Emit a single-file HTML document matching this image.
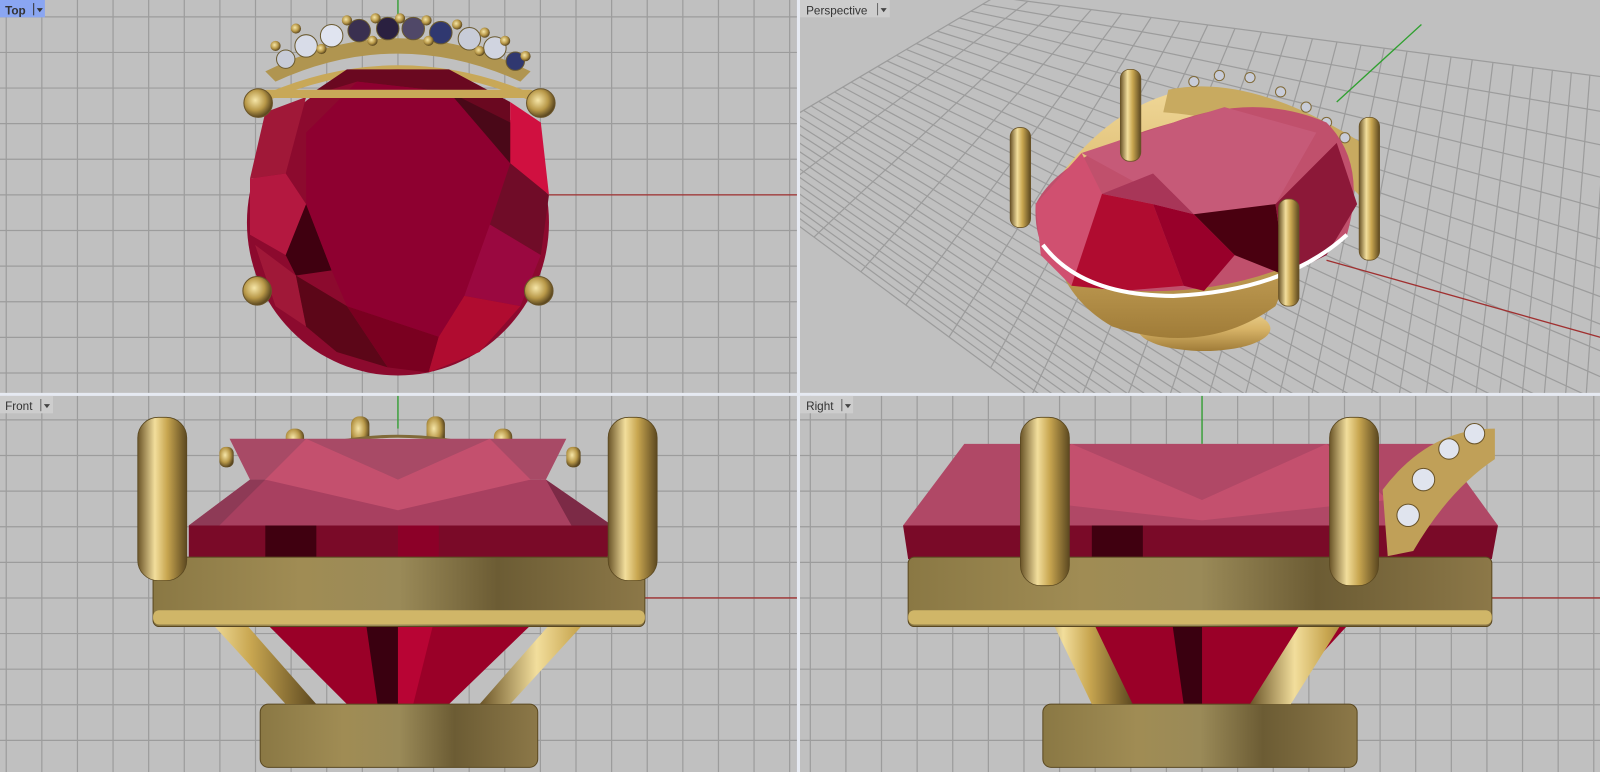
<!DOCTYPE html>
<html><head><meta charset="utf-8"><style>
html,body{margin:0;padding:0;background:#e6eaf2;width:1600px;height:772px;overflow:hidden}
svg{display:block;overflow:hidden}
.lbl{font-family:"Liberation Sans",sans-serif;font-size:11.5px;fill:#333}
</style></head><body>
<svg id="s" width="1600" height="772" viewBox="0 0 1600 772" xmlns="http://www.w3.org/2000/svg">
<defs>
<clipPath id="c1"><rect x="0" y="0" width="781" height="385"/></clipPath>
<clipPath id="c2"><rect x="784" y="0" width="800" height="385"/></clipPath>
<clipPath id="c3"><rect x="0" y="388" width="781" height="369"/></clipPath>
<clipPath id="c4"><rect x="784" y="388" width="800" height="369"/></clipPath>
<linearGradient id="gb" x1="0" y1="0" x2="1" y2="0">
<stop offset="0" stop-color="#8a7844"/><stop offset=".3" stop-color="#a08c54"/><stop offset=".5" stop-color="#9a8a58"/><stop offset=".7" stop-color="#6c5c34"/><stop offset="1" stop-color="#8c7848"/></linearGradient>
<linearGradient id="gp" x1="0" y1="0" x2="1" y2="0">
<stop offset="0" stop-color="#6a5428"/><stop offset=".35" stop-color="#f2de9c"/><stop offset=".6" stop-color="#c8a650"/><stop offset="1" stop-color="#5c4820"/></linearGradient>
<radialGradient id="gc" cx=".4" cy=".4" r=".6"><stop offset="0" stop-color="#f6e6a8"/><stop offset=".6" stop-color="#b89848"/><stop offset="1" stop-color="#5c4820"/></radialGradient>
<linearGradient id="gpg" x1="0" y1="0" x2="0" y2="1"><stop offset="0" stop-color="#f0d898"/><stop offset=".5" stop-color="#d8b468"/><stop offset="1" stop-color="#a07c38"/></linearGradient>
</defs>
<g transform="scale(1.0204)">
<rect x="0" y="0" width="781" height="385" fill="#c0c0c0"/>
<rect x="784" y="0" width="800" height="385" fill="#c0c0c0"/>
<rect x="0" y="388" width="781" height="369" fill="#c0c0c0"/>
<rect x="784" y="388" width="800" height="369" fill="#c0c0c0"/>
<g id="grids" stroke="#9c9c9c" stroke-width="1.2" fill="none"></g>

<g stroke-width="1.3">
<line x1="538" y1="191" x2="781" y2="191" stroke="#a03030"/>
<line x1="390" y1="0" x2="390" y2="30" stroke="#30a030"/>
<line x1="630" y1="586" x2="781" y2="586" stroke="#a03030"/>
<line x1="390" y1="388" x2="390" y2="420" stroke="#30a030"/>
<line x1="1178" y1="388" x2="1178" y2="435" stroke="#30a030"/>
<line x1="1460" y1="586" x2="1584" y2="586" stroke="#a03030"/>
<line x1="1310" y1="100" x2="1393" y2="24" stroke="#30a030"/>
<line x1="1300" y1="255" x2="1584" y2="335" stroke="#a03030"/>
</g>

<g clip-path="url(#c1)">
<path d="M260,70 Q390,5 520,70 L510,80 Q390,25 270,80Z" fill="#b09550"/>
<g>
<circle cx="300" cy="45" r="11" fill="#d8dce8" stroke="#6a5a30"/><circle cx="325" cy="35" r="11" fill="#e0e4f0" stroke="#6a5a30"/>
<circle cx="352" cy="30" r="11" fill="#3a3050" stroke="#6a5a30"/><circle cx="380" cy="28" r="11" fill="#2a2040" stroke="#6a5a30"/>
<circle cx="405" cy="28" r="11" fill="#504868" stroke="#6a5a30"/><circle cx="432" cy="32" r="11" fill="#303870" stroke="#6a5a30"/>
<circle cx="460" cy="38" r="11" fill="#c8ccd8" stroke="#6a5a30"/><circle cx="485" cy="47" r="11" fill="#d0d4e0" stroke="#6a5a30"/>
<circle cx="280" cy="58" r="9" fill="#c8ccd8" stroke="#6a5a30"/><circle cx="505" cy="60" r="9" fill="#303870" stroke="#6a5a30"/>
</g>
<g fill="url(#gc)">
<circle cx="290" cy="28" r="5"/><circle cx="340" cy="20" r="5"/><circle cx="368" cy="18" r="5"/><circle cx="392" cy="18" r="5"/><circle cx="418" cy="20" r="5"/><circle cx="448" cy="24" r="5"/><circle cx="475" cy="32" r="5"/><circle cx="495" cy="40" r="5"/><circle cx="270" cy="45" r="5"/><circle cx="515" cy="55" r="5"/>
<circle cx="315" cy="48" r="5"/><circle cx="365" cy="40" r="5"/><circle cx="420" cy="40" r="5"/><circle cx="470" cy="50" r="5"/>
</g>
<path d="M262,95 Q390,40 520,95" fill="none" stroke="#c8a858" stroke-width="7"/>
<ellipse cx="390" cy="218" rx="148" ry="150" fill="#8c0a2e"/>
<g>
<polygon points="300,95 340,68 440,68 500,100 500,160 440,90 350,80" fill="#6a0820"/>
<polygon points="260,110 300,95 280,170 245,175" fill="#a01838"/>
<polygon points="500,100 530,120 538,191 500,160" fill="#d01040"/>
<polygon points="245,175 280,170 300,200 280,250 245,230" fill="#b41840"/>
<polygon points="280,250 300,200 325,265 290,270" fill="#400010"/>
<polygon points="500,160 538,191 530,250 480,220" fill="#700c28"/>
<polygon points="480,220 530,250 510,300 455,290" fill="#9a0840"/>
<polygon points="250,240 290,270 300,320 270,300" fill="#a01838"/>
<polygon points="290,270 340,300 380,360 330,345 300,320" fill="#5c0618"/>
<polygon points="340,300 430,330 420,365 380,360" fill="#7a0020"/>
<polygon points="430,330 455,290 510,300 470,345 420,365" fill="#b00c30"/>
<polygon points="300,130 350,80 440,90 500,160 480,220 455,290 430,330 340,300 325,265 300,200" fill="#8e0030"/>
<polygon points="440,90 500,120 500,160" fill="#4a0818"/>
</g>
<g fill="url(#gc)" stroke="#6a5428" stroke-width="1">
<rect x="258" y="88" width="265" height="8" fill="#c8a858" stroke="none" rx="3"/>
<circle cx="253" cy="101" r="14"/><circle cx="530" cy="101" r="14"/>
<circle cx="252" cy="285" r="14"/><circle cx="528" cy="285" r="14"/>
</g>
</g>

<g clip-path="url(#c2)">
<ellipse cx="1180" cy="322" rx="65" ry="22" fill="url(#gpg)"/>
<path d="M1030,185 Q1020,280 1090,320 Q1180,350 1250,300 L1300,180 Q1280,90 1180,85 Q1090,95 1030,185Z" fill="url(#gpg)"/>
<path d="M1145,88 Q1230,70 1350,150 L1340,200 Q1270,120 1140,110Z" fill="#c8aa60"/>
<g fill="#c8ccd8" stroke="#806a38"><circle cx="1170" cy="80" r="5"/><circle cx="1195" cy="74" r="5"/><circle cx="1225" cy="76" r="5"/><circle cx="1255" cy="90" r="5"/><circle cx="1280" cy="105" r="5"/><circle cx="1300" cy="120" r="5"/><circle cx="1318" cy="135" r="5"/></g>
<path d="M1015,200 Q1010,280 1110,285 Q1230,290 1320,230 Q1340,160 1300,120 Q1230,90 1150,120 Q1040,150 1015,200Z" fill="#c0506c"/>
<polygon points="1060,150 1150,120 1200,105 1290,130 1250,200 1170,210" fill="#c65a78"/>
<polygon points="1015,200 1060,150 1080,190 1050,280 1020,250" fill="#d05070"/>
<polygon points="1050,280 1080,190 1130,200 1160,280 1100,285" fill="#b00c30"/>
<polygon points="1130,200 1170,210 1210,250 1180,285 1160,280" fill="#98002a"/>
<polygon points="1170,210 1250,200 1260,270 1210,250" fill="#4a0010"/>
<polygon points="1250,200 1310,140 1330,200 1300,250 1260,270" fill="#8c1838"/>
<polygon points="1080,190 1130,200 1170,210 1130,170" fill="#a83658"/>
<path d="M1022,240 Q1060,290 1150,290 Q1260,285 1320,230" fill="none" stroke="#fff" stroke-width="4"/>
<g stroke="#6a5428" stroke-width=".8">
<rect x="1098" y="68" width="20" height="90" rx="9" fill="url(#gp)"/>
<rect x="990" y="125" width="20" height="98" rx="9" fill="url(#gp)"/>
<rect x="1332" y="115" width="20" height="140" rx="9" fill="url(#gp)"/>
<rect x="1253" y="195" width="20" height="105" rx="9" fill="url(#gp)"/>
</g>
</g>

<g clip-path="url(#c3)">
<g fill="url(#gc)"><rect x="344" y="408" width="18" height="30" rx="8"/><rect x="418" y="408" width="18" height="30" rx="8"/><rect x="280" y="420" width="18" height="22" rx="8"/><rect x="484" y="420" width="18" height="22" rx="8"/><rect x="215" y="438" width="14" height="20" rx="6"/><rect x="555" y="438" width="14" height="20" rx="6"/></g>
<path d="M300,440 Q390,415 480,440Z" fill="#ddd" stroke="#806a38" stroke-width="3"/>
<polygon points="245,470 535,470 600,515 185,515" fill="#a84060"/>
<polygon points="245,470 535,470 555,430 225,430" fill="#a84a66"/>
<polygon points="300,430 390,470 480,430 520,470 390,500 260,470" fill="#c4506e"/>
<polygon points="185,515 245,470 260,470 215,515" fill="#8e3a56"/>
<polygon points="560,515 535,470 600,515" fill="#7c2a46"/>
<polygon points="185,515 600,515 595,550 185,550" fill="#7a0a28"/>
<rect x="260" y="515" width="50" height="35" fill="#400010"/>
<rect x="390" y="515" width="40" height="35" fill="#8c0028"/>
<polygon points="200,550 585,550 440,690 340,690" fill="#9a0028"/>
<polygon points="350,550 390,550 390,690 370,690" fill="#3a0010"/>
<polygon points="390,550 440,550 405,690 390,690" fill="#b80434"/>
<rect x="255" y="690" width="272" height="62" rx="8" fill="url(#gb)" stroke="#5a4820"/>
<path d="M150,548 L280,690 L310,690 L185,548Z" fill="url(#gp)"/>
<path d="M630,548 L500,690 L470,690 L595,548Z" fill="url(#gp)"/>
<rect x="150" y="546" width="482" height="68" rx="6" fill="url(#gb)" stroke="#5a4820"/>
<rect x="150" y="598" width="482" height="14" rx="6" fill="#d0b668"/>
<g stroke="#5a4820" stroke-width=".8">
<rect x="135" y="409" width="48" height="160" rx="20" fill="url(#gp)"/>
<rect x="596" y="409" width="48" height="160" rx="20" fill="url(#gp)"/>
</g>
</g>

<g clip-path="url(#c4)">
<polygon points="945,435 1410,435 1468,515 885,515" fill="#b04866"/>
<polygon points="1050,435 1178,490 1300,435 1360,490 1178,510 1000,490" fill="#c4506e"/>
<polygon points="885,515 1468,515 1462,548 890,548" fill="#7a0a28"/>
<rect x="1070" y="515" width="50" height="33" fill="#400010"/>
<polygon points="990,548 1380,548 1250,690 1110,690" fill="#9a0028"/>
<polygon points="1140,548 1178,548 1178,690 1160,690" fill="#3a0010"/>
<rect x="1022" y="690" width="308" height="62" rx="8" fill="url(#gb)" stroke="#5a4820"/>
<path d="M1005,555 L1070,690 L1110,690 L1045,555Z" fill="url(#gp)"/>
<path d="M1350,555 L1265,690 L1225,690 L1310,555Z" fill="url(#gp)"/>
<rect x="890" y="546" width="572" height="68" rx="6" fill="url(#gb)" stroke="#5a4820"/>
<rect x="890" y="598" width="572" height="14" rx="6" fill="#d0b668"/>
<path d="M1355,480 Q1400,420 1465,420 L1465,450 Q1420,480 1385,540 L1360,545Z" fill="#c0a058"/>
<g fill="#e0e4ee" stroke="#6a5428"><circle cx="1445" cy="425" r="10"/><circle cx="1420" cy="440" r="10"/><circle cx="1395" cy="470" r="11"/><circle cx="1380" cy="505" r="11"/></g>
<g stroke="#5a4820" stroke-width=".8">
<rect x="1000" y="409" width="48" height="165" rx="20" fill="url(#gp)"/>
<rect x="1303" y="409" width="48" height="165" rx="20" fill="url(#gp)"/>
</g>
</g>

<rect x="0" y="0" width="44" height="17" fill="#8aa6f2"/>
<text x="5" y="14" class="lbl" font-weight="bold">Top</text>
<line x1="33" y1="3" x2="33" y2="15" stroke="#333"/><path d="M36,8 h6 l-3,4z" fill="#333"/>
<rect x="784" y="0" width="88" height="17" fill="#cdcdcd"/>
<text x="790" y="14" class="lbl">Perspective</text>
<line x1="860" y1="3" x2="860" y2="15" stroke="#666"/><path d="M863,8 h6 l-3,4z" fill="#444"/>
<rect x="0" y="388" width="52" height="17" fill="#cdcdcd"/>
<text x="5" y="402" class="lbl">Front</text>
<line x1="40" y1="391" x2="40" y2="403" stroke="#666"/><path d="M43,396 h6 l-3,4z" fill="#444"/>
<rect x="784" y="388" width="52" height="17" fill="#cdcdcd"/>
<text x="790" y="402" class="lbl">Right</text>
<line x1="825" y1="391" x2="825" y2="403" stroke="#666"/><path d="M828,396 h6 l-3,4z" fill="#444"/>
</g>
</svg>
<script>
(function(){
var g=document.getElementById('grids'),ns='http://www.w3.org/2000/svg';
function L(x1,y1,x2,y2,c){var l=document.createElementNS(ns,'line');l.setAttribute('x1',x1);l.setAttribute('y1',y1);l.setAttribute('x2',x2);l.setAttribute('y2',y2);if(c)l.setAttribute('clip-path','url(#'+c+')');g.appendChild(l);}
var s=34.9,k;
function ortho(cx,cy,x0,y0,x1,y1,c){for(k=-30;k<=30;k++){var x=cx+k*s;if(x>x0&&x<x1)L(x,y0,x,y1,c);var y=cy+k*s;if(y>y0&&y<y1)L(x0,y,x1,y,c);}}
ortho(390,191,0,0,781,385,'c1');
ortho(390,586,0,388,781,757,'c3');
ortho(1178,586,784,388,1584,757,'c4');
var P=[[975,-3],[1720,95],[1700,900],[700,160]];
function H(u,v){
 var w0=1.0,w1=1.5,w2=2.6,w3=1.5;
 var a=(1-u)*(1-v)*w0,b=u*(1-v)*w1,c=u*v*w2,d=(1-u)*v*w3,S=a+b+c+d;
 return [(a*P[0][0]+b*P[1][0]+c*P[2][0]+d*P[3][0])/S,(a*P[0][1]+b*P[1][1]+c*P[2][1]+d*P[3][1])/S];}
var N=34;
for(k=0;k<=N;k++){var t=k/N;
 var a1=H(t,0),a2=H(t,1);L(a1[0],a1[1],a2[0],a2[1],'c2');
 var q1=H(0,t),q2=H(1,t);L(q1[0],q1[1],q2[0],q2[1],'c2');}
})();
</script>
</body></html>
